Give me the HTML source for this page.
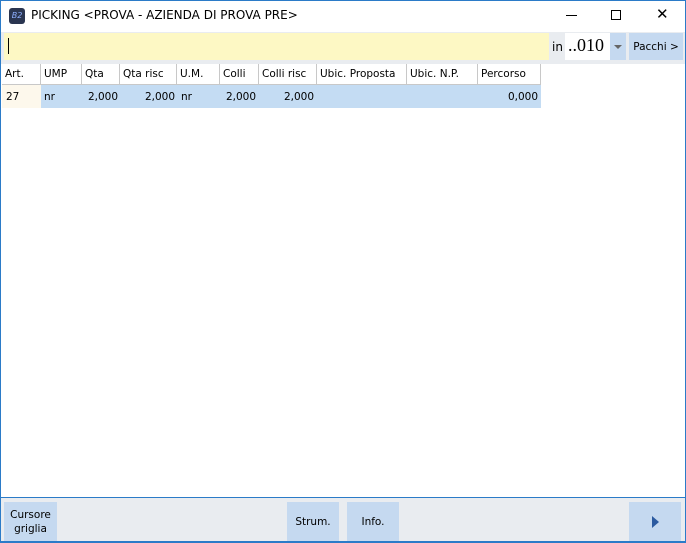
<!DOCTYPE html>
<html><head><style>
*{box-sizing:border-box;margin:0;padding:0}
body{width:686px;height:543px;background:#fff;font-family:"DejaVu Sans","Liberation Sans",sans-serif;font-size:11px;color:#000;position:relative;overflow:hidden}
.win{position:absolute;left:0;top:0;width:686px;height:543px;border:1px solid #2b7bc8}
.a{position:absolute}
.hd{position:absolute;top:64px;height:21px;border-right:1px solid #c8c8c8;border-bottom:1px solid #c8c8c8;padding:4px 0 0 3px;font-size:10.5px;background:#fff}
.cell{position:absolute;top:85px;height:23px;background:#c4dcf3;padding-top:6px;font-size:10.5px}
.btn{position:absolute;top:502px;height:40px;background:#c5d9f0;text-align:center;font-size:10.5px;display:flex;align-items:center;justify-content:center;line-height:14px}
</style></head><body>
<div class="win"></div>
<div class="a" style="left:9px;top:8px;width:16px;height:16px;background:#2a3550;border-radius:3px;color:#8fb0ff;font-size:8px;font-style:italic;text-align:center;line-height:16px">B2</div>
<div class="a" style="left:31px;top:8px;font-size:12px">PICKING &lt;PROVA - AZIENDA DI PROVA PRE&gt;</div>
<div class="a" style="left:566px;top:15px;width:11px;height:1px;background:#000"></div>
<div class="a" style="left:611px;top:10px;width:10px;height:10px;border:1px solid #000"></div>
<div class="a" style="left:656px;top:5px;font-size:15px;font-weight:300">✕</div>
<div class="a" style="left:1px;top:32px;width:684px;height:32px;background:#e9ecf0"></div>
<div class="a" style="left:4px;top:33px;width:545px;height:27px;background:#fdf8c4"></div>
<div class="a" style="left:8px;top:38px;width:1px;height:16px;background:#000"></div>
<div class="a" style="left:552px;top:40px;font-size:12px">in</div>
<div class="a" style="left:565px;top:33px;width:45px;height:27px;background:#fff;font-family:'Liberation Serif',serif;font-size:18px;padding:2px 0 0 3px">..010</div>
<div class="a" style="left:610px;top:33px;width:16px;height:27px;background:#c5d9f0"></div>
<div class="a" style="left:614px;top:45px;border-left:4px solid transparent;border-right:4px solid transparent;border-top:4px solid #666"></div>
<div class="a" style="left:629px;top:33px;width:54px;height:27px;background:#c5d9f0;font-size:10.5px;text-align:center;padding-top:8px">Pacchi &gt;</div>
<div class="hd" style="left:2px;width:39px">Art.</div>
<div class="hd" style="left:41px;width:41px">UMP</div>
<div class="hd" style="left:82px;width:38px">Qta</div>
<div class="hd" style="left:120px;width:57px">Qta risc</div>
<div class="hd" style="left:177px;width:43px">U.M.</div>
<div class="hd" style="left:220px;width:39px">Colli</div>
<div class="hd" style="left:259px;width:58px">Colli risc</div>
<div class="hd" style="left:317px;width:90px">Ubic. Proposta</div>
<div class="hd" style="left:407px;width:71px">Ubic. N.P.</div>
<div class="hd" style="left:478px;width:63px">Percorso</div>
<div class="cell" style="left:2px;width:39px;background:#fdf8ec;padding-left:4px">27</div>
<div class="cell" style="left:41px;width:500px"></div>
<div class="cell" style="left:44px">nr</div>
<div class="cell" style="left:82px;width:36px;text-align:right">2,000</div>
<div class="cell" style="left:120px;width:55px;text-align:right">2,000</div>
<div class="cell" style="left:181px">nr</div>
<div class="cell" style="left:220px;width:36px;text-align:right">2,000</div>
<div class="cell" style="left:259px;width:55px;text-align:right">2,000</div>
<div class="cell" style="left:478px;width:60px;text-align:right">0,000</div>
<div class="a" style="left:1px;top:497px;width:684px;height:45px;background:#e9ecf0;border-top:1px solid #2b7bc8"></div>
<div class="btn" style="left:4px;width:53px">Cursore<br>griglia</div>
<div class="btn" style="left:287px;width:52px">Strum.</div>
<div class="btn" style="left:347px;width:52px">Info.</div>
<div class="btn" style="left:629px;width:52px"><div style="border-top:6px solid transparent;border-bottom:6px solid transparent;border-left:7px solid #2b5aa0"></div></div>
<div class="a" style="left:0;top:541px;width:686px;height:2px;background:#2b7bc8"></div>
</body></html>
